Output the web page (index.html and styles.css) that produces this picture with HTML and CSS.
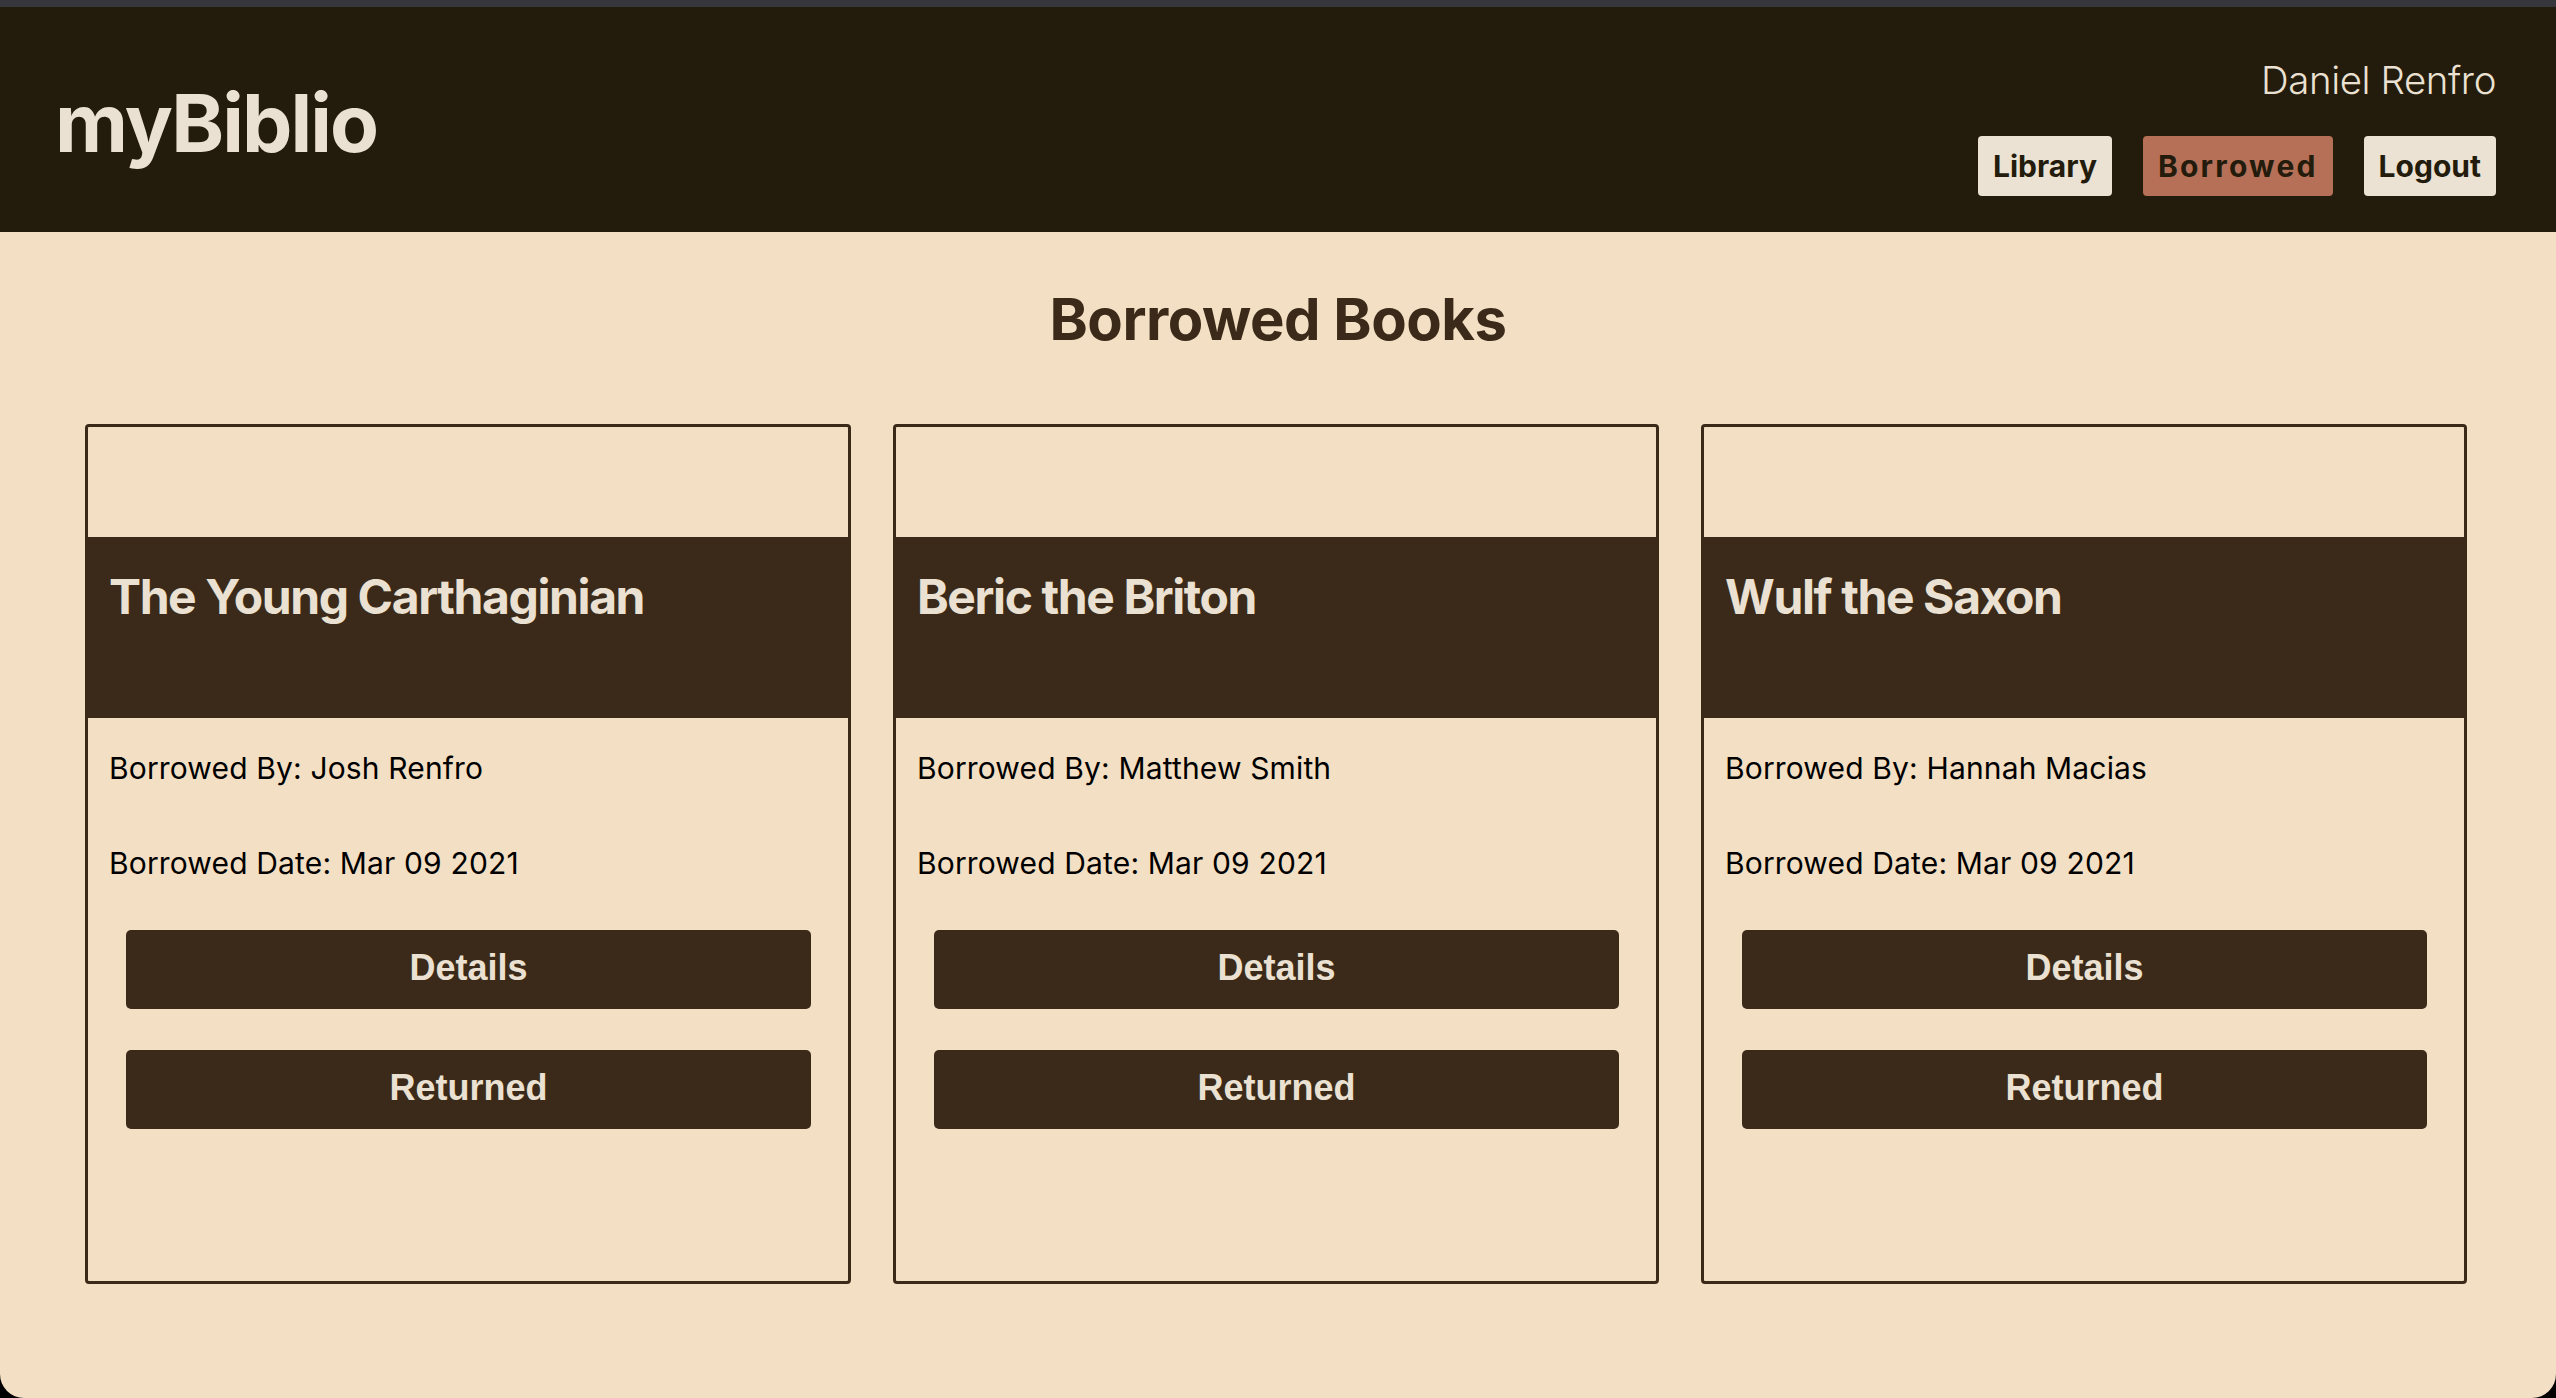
FILE: index.html
```html
<!DOCTYPE html>
<html lang="en">
<head>
<meta charset="utf-8">
<title>myBiblio - Borrowed</title>
<link rel="stylesheet" href="styles.css">
</head>
<body>
<div class="window">
  <div class="chrome"></div>
  <header class="topbar">
    <h1 class="logo">myBiblio</h1>
    <div class="account">
      <div class="user">Daniel Renfro</div>
      <nav class="nav">
        <a class="nav-btn">Library</a>
        <a class="nav-btn active">Borrowed</a>
        <a class="nav-btn">Logout</a>
      </nav>
    </div>
  </header>
  <main class="content">
    <h2 class="page-title">Borrowed Books</h2>
    <section class="cards">
      <article class="card">
        <div class="card-cover"></div>
        <div class="card-head"><h3 class="card-title">The Young Carthaginian</h3></div>
        <div class="card-body">
          <p class="meta">Borrowed By: Josh Renfro</p>
          <p class="meta">Borrowed Date: Mar 09 2021</p>
          <button class="action">Details</button>
          <button class="action">Returned</button>
        </div>
      </article>
      <article class="card">
        <div class="card-cover"></div>
        <div class="card-head"><h3 class="card-title">Beric the Briton</h3></div>
        <div class="card-body">
          <p class="meta">Borrowed By: Matthew Smith</p>
          <p class="meta">Borrowed Date: Mar 09 2021</p>
          <button class="action">Details</button>
          <button class="action">Returned</button>
        </div>
      </article>
      <article class="card">
        <div class="card-cover"></div>
        <div class="card-head"><h3 class="card-title">Wulf the Saxon</h3></div>
        <div class="card-body">
          <p class="meta">Borrowed By: Hannah Macias</p>
          <p class="meta">Borrowed Date: Mar 09 2021</p>
          <button class="action">Details</button>
          <button class="action">Returned</button>
        </div>
      </article>
    </section>
  </main>
</div>
</body>
</html>
```

FILE: styles.css
```css
html, body {
  margin: 0;
  padding: 0;
  background: #000;
  height: 100%;
}

.window {
  height: 1398px;
  display: flex;
  flex-direction: column;
  background: #f3dfc3;
  border-radius: 0 0 24px 24px;
  overflow: hidden;
  font-family: "Inter", "Noto Sans", sans-serif;
}

.chrome {
  height: 7px;
  background: #36373c;
  flex: none;
}

.topbar {
  flex: none;
  height: 225px;
  box-sizing: border-box;
  background: #231b0b;
  display: flex;
  justify-content: space-between;
  padding: 0 60px 0 55px;
}

.logo {
  margin: 0;
  padding-top: 67px;
  font-size: 80px;
  line-height: 97px;
  font-weight: 700;
  letter-spacing: -1.9px;
  color: #ebe1d2;
}

.account {
  display: flex;
  flex-direction: column;
  align-items: flex-end;
  padding-top: 50px;
}

.user {
  font-size: 38.4px;
  line-height: 46px;
  font-weight: 300;
  letter-spacing: -0.4px;
  color: #ebe1d2;
}

.nav {
  display: flex;
  gap: 31px;
  margin-top: 33px;
}

.nav-btn {
  height: 60px;
  box-sizing: border-box;
  padding: 0 15px;
  display: flex;
  align-items: center;
  background: #ebe2d3;
  color: #231b0b;
  border-radius: 4px;
  font-size: 30px;
  font-weight: 700;
}

.nav-btn.active {
  background: #b67058;
  letter-spacing: 2.2px;
}

.content {
  flex: 1;
}

.page-title {
  margin: 52px 0 70px;
  text-align: center;
  font-size: 58px;
  line-height: 70px;
  font-weight: 700;
  letter-spacing: -0.5px;
  color: #3b2a19;
}

.cards {
  display: grid;
  grid-template-columns: repeat(3, 766px);
  gap: 42px;
  justify-content: center;
  padding-right: 4px;
}

.card {
  box-sizing: border-box;
  border: 3px solid #3b2a19;
  border-radius: 4px;
}

.card-cover {
  height: 110px;
}

.card-head {
  height: 181px;
  box-sizing: border-box;
  background: #3b2a19;
  padding: 31px 21px 0;
}

.card-title {
  margin: 0;
  font-size: 48px;
  line-height: 58px;
  font-weight: 700;
  letter-spacing: -1.4px;
  color: #ebe1d2;
}

.card-body {
  padding: 32px 0 152px;
  display: flex;
  flex-direction: column;
}

.meta {
  margin: 0 21px 59px;
  font-size: 30px;
  line-height: 36px;
  letter-spacing: 0.15px;
  color: #000;
}

.meta + .meta {
  margin-bottom: 49px;
}

.action {
  height: 79px;
  margin: 0 37px 0 38px;
  border: none;
  border-radius: 5px;
  background: #3b2a19;
  color: #ebe1d2;
  font-family: "Liberation Sans", Arial, sans-serif;
  font-size: 36px;
  font-weight: 700;
  padding: 0 0 3px;
}

.action + .action {
  margin-top: 41px;
}
```
